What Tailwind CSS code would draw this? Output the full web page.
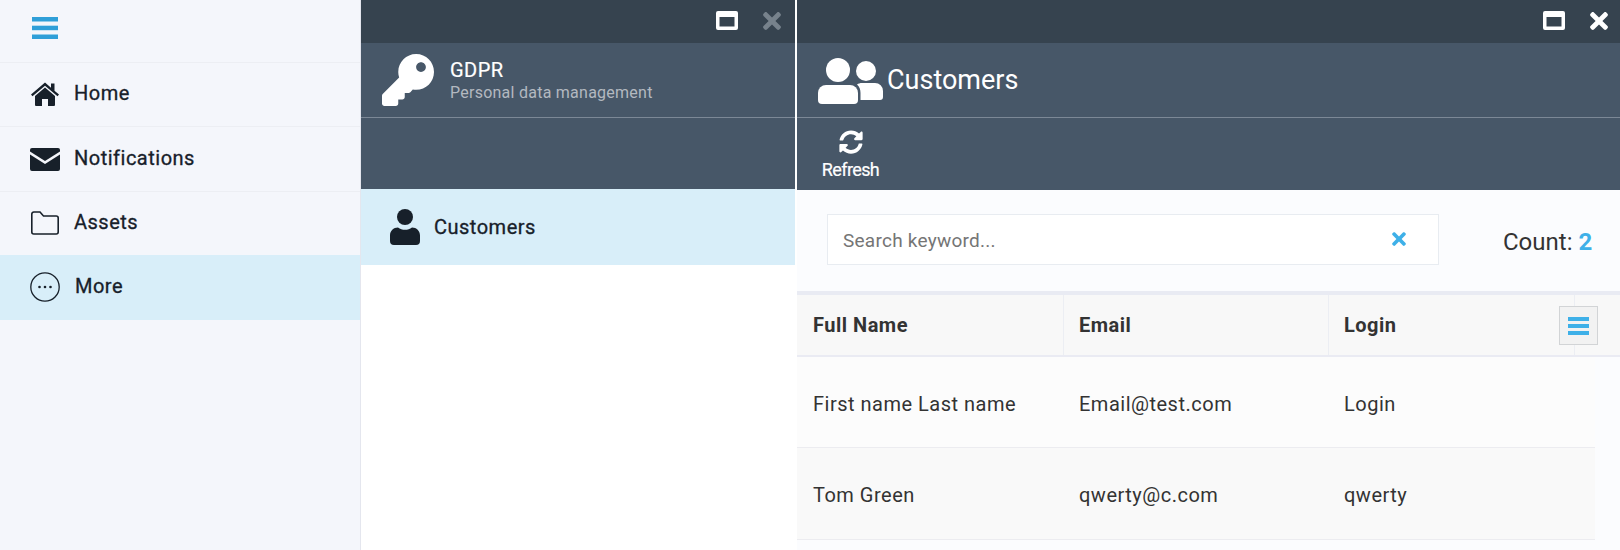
<!DOCTYPE html>
<html lang="en">
<head>
  <meta charset="UTF-8" />
  <title>GDPR Customers</title>
  <script src="https://cdn.jsdelivr.net/npm/@tailwindcss/browser@4"></script>
</head>
<body class="w-[1620px] h-[550px] overflow-hidden bg-white font-['Roboto',sans-serif] flex">

  <!-- Sidebar -->
  <div class="w-[361px] h-full shrink-0 bg-[#f4f6fb] border-r border-[#e4e6ee] text-[#17202a] text-[20px] tracking-[0.5px] font-normal [-webkit-text-stroke:0.3px]">
    <div class="h-[63px] pl-[32px] pt-[17px] border-b border-[#eceef3]">
      <svg class="w-[26px] h-[22px]" viewBox="0 0 26 22" fill="#2f9fd8"><rect y="0" width="26" height="4.5"/><rect y="8.7" width="26" height="4.5"/><rect y="17.5" width="26" height="4.5"/></svg>
    </div>
    <div class="h-[64px] flex items-center border-b border-[#eceef3] pl-[31px]">
      <svg class="w-[28px] h-[24px] mr-[15px] mt-[-2px]" viewBox="0 0 28 24" fill="#17202a"><path d="M14 5.500 4 14v9a1 1 0 0 0 1 1h6v-7h6v7h6a1 1 0 0 0 1-1v-9z"/><path d="M14 0.600 20 5.700V1.500h3.500v7.200L28 12.500l-1.500 1.800L14 3.700 1.500 14.300 0 12.500z"/></svg>
      <span class="mt-[-4px]">Home</span>
    </div>
    <div class="h-[65px] flex items-center border-b border-[#eceef3] pl-[30px]">
      <svg class="w-[30px] h-[23px] mr-[14px]" viewBox="0 0 30 23" fill="#17202a"><path d="M2 0h26a2 2 0 0 1 2 2v1.500L15 13 0 3.500V2a2 2 0 0 1 2-2z"/><path d="M0 6.500 15 16 30 6.500V21a2 2 0 0 1-2 2H2a2 2 0 0 1-2-2z"/></svg>
      <span class="mt-[-2px]">Notifications</span>
    </div>
    <div class="h-[63px] flex items-center pl-[31px]">
      <svg class="w-[28px] h-[24px] mr-[15px] mt-[-2px]" viewBox="0 0 28 24" fill="none" stroke="#17202a" stroke-width="1.600"><path d="M.8 3A2 2 0 0 1 2.800 1H9l3.500 4h12.700a2 2 0 0 1 2 2v14a2 2 0 0 1-2 2H2.800a2 2 0 0 1-2-2z"/></svg>
      <span class="mt-[-4px]">Assets</span>
    </div>
    <div class="h-[65px] flex items-center bg-[#d8eef9] pl-[30px]">
      <svg class="w-[30px] h-[30px] mr-[15px] mt-[-1px]" viewBox="0 0 30 30" fill="none"><circle cx="15" cy="15" r="14.200" stroke="#17202a" stroke-width="1.300"/><circle cx="9.500" cy="15" r="1.300" fill="#17202a"/><circle cx="15" cy="15" r="1.300" fill="#17202a"/><circle cx="20.500" cy="15" r="1.300" fill="#17202a"/></svg>
      <span class="mt-[-3px]">More</span>
    </div>
  </div>

  <!-- GDPR panel -->
  <div class="w-[436px] h-full shrink-0 border-r-2 border-white">
    <div class="h-[43px] bg-[#36434f] flex items-center justify-end pr-[14px] pb-[2px] gap-[25px]">
      <svg class="w-[22px] h-[19px]" viewBox="0 0 22 19" fill="#fff"><path fill-rule="evenodd" d="M2 0h18a2 2 0 0 1 2 2v15a2 2 0 0 1-2 2H2a2 2 0 0 1-2-2V2a2 2 0 0 1 2-2zM3.500 6v9.500h15V6z"/></svg>
      <svg class="w-[18px] h-[26px]" viewBox="0 0 352 512" fill="#77828c"><path d="M242.720 256l100.070-100.070c12.280-12.280 12.280-32.190 0-44.480l-22.240-22.240c-12.280-12.280-32.190-12.280-44.480 0L176 189.280 75.930 89.210c-12.280-12.280-32.190-12.280-44.480 0L9.210 111.450c-12.280 12.280-12.280 32.190 0 44.480L109.280 256 9.210 356.070c-12.280 12.280-12.280 32.190 0 44.480l22.240 22.240c12.280 12.280 32.200 12.280 44.480 0L176 322.720l100.070 100.070c12.280 12.280 32.200 12.280 44.480 0l22.240-22.240c12.280-12.280 12.280-32.190 0-44.480L242.720 256z"/></svg>
    </div>
    <div class="h-[75px] bg-[#475768] border-b border-[#7c8896] flex items-center pl-[21px]">
      <svg class="w-[52px] h-[52px] mr-[16px]" viewBox="0 0 512 512" fill="#fff"><path d="M512 176.001C512 273.203 433.202 352 336 352c-11.220 0-22.190-1.062-32.827-3.069l-24.012 27.014A23.999 23.999 0 0 1 261.223 384H224v40c0 13.255-10.745 24-24 24h-40v40c0 13.255-10.745 24-24 24H24c-13.255 0-24-10.745-24-24v-78.059c0-6.365 2.529-12.470 7.029-16.971l161.802-161.802C163.108 213.814 160 195.271 160 176 160 78.798 238.797.001 335.999 0 433.488-.001 512 78.511 512 176.001zM336 128c0 26.510 21.490 48 48 48s48-21.490 48-48-21.490-48-48-48-48 21.490-48 48z"/></svg>
      <div>
        <div class="text-white text-[20px] tracking-[0.5px] leading-[24px] mt-[1px] [-webkit-text-stroke:0.2px]">GDPR</div>
        <div class="text-[#b3b9c0] text-[16px] tracking-[0.25px] leading-[22px]">Personal data management</div>
      </div>
    </div>
    <div class="h-[71px] bg-[#475768]"></div>
    <div class="h-[76px] bg-[#d8eef9] flex items-center pl-[30px] text-[#17202a] text-[20px] tracking-[0.5px] font-normal [-webkit-text-stroke:0.3px]">
      <svg class="w-[30px] h-[36px] mr-[14px] ml-[-1px]" viewBox="0 0 30 36" fill="#17202a"><circle cx="15" cy="8" r="8"/><path d="M8 18.500c2 1.500 4.500 2.300 7 2.300s5-.8 7-2.300c4.500 0 8 3.500 8 8V32a4 4 0 0 1-4 4H4a4 4 0 0 1-4-4v-5.500c0-4.500 3.500-8 8-8z"/></svg>
      <span>Customers</span>
    </div>
  </div>

  <!-- Customers panel -->
  <div class="flex-1 h-full bg-[#fbfcfe] min-w-0">
    <div class="h-[43px] bg-[#36434f] flex items-center justify-end pr-[12px] pb-[2px] gap-[25px]">
      <svg class="w-[22px] h-[19px]" viewBox="0 0 22 19" fill="#fff"><path fill-rule="evenodd" d="M2 0h18a2 2 0 0 1 2 2v15a2 2 0 0 1-2 2H2a2 2 0 0 1-2-2V2a2 2 0 0 1 2-2zM3.500 6v9.500h15V6z"/></svg>
      <svg class="w-[18px] h-[26px]" viewBox="0 0 352 512" fill="#fff"><path d="M242.720 256l100.070-100.070c12.280-12.280 12.280-32.190 0-44.480l-22.240-22.240c-12.280-12.280-32.190-12.280-44.480 0L176 189.280 75.930 89.210c-12.280-12.280-32.190-12.280-44.480 0L9.210 111.450c-12.280 12.280-12.280 32.190 0 44.480L109.280 256 9.210 356.070c-12.280 12.280-12.280 32.190 0 44.480l22.240 22.240c12.280 12.280 32.200 12.280 44.480 0L176 322.720l100.070 100.070c12.280 12.280 32.200 12.280 44.480 0l22.240-22.240c12.280-12.280 12.280-32.190 0-44.480L242.720 256z"/></svg>
    </div>
    <div class="h-[75px] bg-[#475768] border-b border-[#7c8896] flex items-center pl-[21px]">
      <svg class="w-[65px] h-[46px] mr-[4px] mt-[2px]" viewBox="0 0 65 46" fill="#fff"><circle cx="20" cy="12" r="12"/><path d="M8 27h24a8 8 0 0 1 8 8v7a4 4 0 0 1-4 4H4a4 4 0 0 1-4-4v-7a8 8 0 0 1 8-8z"/><circle cx="48" cy="13" r="10"/><path d="M44 25h13a8 8 0 0 1 8 8v6a3 3 0 0 1-3 3H42.500v-7c0-3.500-1-6.500-3.500-8.500 1.500-1 3-1.500 5-1.500z"/></svg>
      <span class="text-white text-[27px] leading-none">Customers</span>
    </div>
    <div class="h-[72px] bg-[#475768] pl-[25px] pt-[12px]">
      <div class="w-[57px] flex flex-col items-center">
        <svg class="w-[24px] h-[24px]" viewBox="0 0 512 512" fill="#fff"><path d="M370.720 133.280C339.458 104.008 298.888 87.962 255.848 88c-77.458.068-144.328 53.178-162.791 126.850-1.344 5.363-6.122 9.150-11.651 9.150H24.103c-7.498 0-13.194-6.807-11.807-14.176C33.933 94.924 134.813 8 256 8c66.448 0 126.791 26.136 171.315 68.685L463.030 40.970C478.149 25.851 504 36.559 504 57.941V192c0 13.255-10.745 24-24 24H345.941c-21.382 0-32.090-25.851-16.971-40.971l41.750-41.749zM32 296h134.059c21.382 0 32.090 25.851 16.971 40.971l-41.750 41.750c31.262 29.273 71.835 45.319 114.876 45.280 77.418-.07 144.315-53.144 162.787-126.849 1.344-5.363 6.122-9.150 11.651-9.150h57.304c7.498 0 13.194 6.807 11.807 14.176C478.067 417.076 377.187 504 256 504c-66.448 0-126.791-26.136-171.315-68.685L48.970 471.030C33.851 486.149 8 475.441 8 454.059V320c0-13.255 10.745-24 24-24z"/></svg>
        <span class="text-white text-[18px] leading-[20px] mt-[6px] tracking-[-0.6px] whitespace-nowrap [-webkit-text-stroke:0.2px]">Refresh</span>
      </div>
    </div>

    <!-- Search -->
    <div class="h-[105px] flex items-start border-b-[4px] border-[#e9ebf3] pt-[24px] pl-[30px]">
      <div class="w-[612px] h-[51px] bg-white border border-[#e8ecf1] flex items-center pl-[15px] pr-[32px] justify-between">
        <span class="text-[19px] tracking-[0.25px] text-[#757575] mt-[4px]">Search keyword...</span>
        <svg class="w-[14px] h-[20px] mt-[-2px]" viewBox="0 0 352 512" fill="#3eb0e8"><path d="M242.720 256l100.070-100.070c12.280-12.280 12.280-32.190 0-44.480l-22.240-22.240c-12.280-12.280-32.190-12.280-44.480 0L176 189.280 75.930 89.210c-12.280-12.280-32.190-12.280-44.480 0L9.210 111.450c-12.280 12.280-12.280 32.190 0 44.480L109.280 256 9.210 356.070c-12.280 12.280-12.280 32.190 0 44.480l22.240 22.240c12.280 12.280 32.200 12.280 44.480 0L176 322.720l100.070 100.070c12.280 12.280 32.200 12.280 44.480 0l22.240-22.240c12.280-12.280 12.280-32.190 0-44.480L242.720 256z"/></svg>
      </div>
      <div class="ml-[64px] h-[55px] flex items-center text-[24px] text-[#333]">Count:&nbsp;<span class="font-bold text-[#3eb0e8]">2</span></div>
    </div>

    <!-- Table -->
    <div class="relative text-[20px] tracking-[0.5px] text-[#333]">
      <div class="flex h-[62px] bg-[#f8f8f8] border-b-[2px] border-[#eaebf3] font-bold">
        <div class="w-[267px] flex items-center pl-[16px] border-r border-[#eceef3]">Full Name</div>
        <div class="w-[265px] flex items-center pl-[15px] border-r border-[#eceef3]">Email</div>
        <div class="w-[246px] flex items-center pl-[15px] border-r border-[#eceef3]">Login</div>
      </div>
      <div class="flex w-[798px] h-[91px] bg-[#fcfcfc] border-b border-[#ececf0]">
        <div class="w-[267px] flex items-center pl-[16px] pt-[3px]">First name Last name</div>
        <div class="w-[265px] flex items-center pl-[15px] pt-[3px]">Email@test.com</div>
        <div class="w-[246px] flex items-center pl-[15px] pt-[3px]">Login</div>
      </div>
      <div class="flex w-[798px] h-[92px] bg-[#f9f9f9] border-b border-[#ececf0]">
        <div class="w-[267px] flex items-center pl-[16px] pt-[2px]">Tom Green</div>
        <div class="w-[265px] flex items-center pl-[15px] pt-[2px]">qwerty@c.com</div>
        <div class="w-[246px] flex items-center pl-[15px] pt-[2px]">qwerty</div>
      </div>
      <div class="absolute left-[762px] top-[11px] w-[39px] h-[39px] bg-[#f2f2f2] border border-[#d2d4d6] flex items-center justify-center">
        <svg class="w-[21px] h-[18px] mt-[1px]" viewBox="0 0 21 18" fill="#3eb0e8"><rect y="0" width="21" height="4"/><rect y="7" width="21" height="4"/><rect y="14" width="21" height="4"/></svg>
      </div>
    </div>
  </div>
</body>
</html>
